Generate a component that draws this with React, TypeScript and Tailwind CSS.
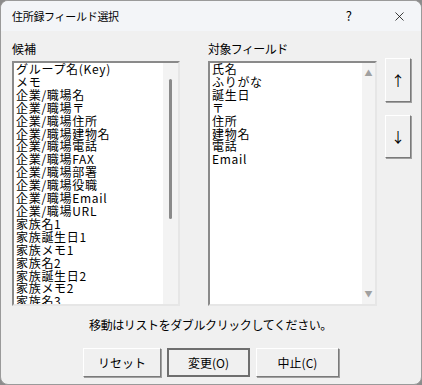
import { X } from 'lucide-react'

const candidates = [
  'グループ名(Key)',
  'メモ',
  '企業/職場名',
  '企業/職場〒',
  '企業/職場住所',
  '企業/職場建物名',
  '企業/職場電話',
  '企業/職場FAX',
  '企業/職場部署',
  '企業/職場役職',
  '企業/職場Email',
  '企業/職場URL',
  '家族名1',
  '家族誕生日1',
  '家族メモ1',
  '家族名2',
  '家族誕生日2',
  '家族メモ2',
  '家族名3',
]

const targets = ['氏名', 'ふりがな', '誕生日', '〒', '住所', '建物名', '電話', 'Email']

const font = { fontFamily: '"Noto Sans CJK JP", "Liberation Sans", sans-serif' }

function Btn({ label, def, className }: { label: string; def?: boolean; className?: string }) {
  return (
    <button
      className={`flex items-center justify-center bg-[#f0f0f0] text-[12px] text-black ${
        def
          ? 'border-2 border-[#6e6e6e]'
          : 'border border-t-white border-l-white border-r-[#7a7a7a] border-b-[#7a7a7a] shadow-[1px_1px_0_#a0a0a0]'
      } ${className ?? ''}`}
    >
      {label}
    </button>
  )
}

export default function App() {
  return (
    <div className="w-[422px] h-[385px] bg-[#8c8c8c]" style={font}>
      <div className="w-full h-full rounded-[8px] overflow-hidden border border-[#9a9a9a] bg-[#f0f0f0] flex flex-col">
        {/* タイトルバー */}
        <div className="h-[30px] shrink-0 bg-[#f3f5f8] flex items-center pl-[11px] text-[11px] text-black">
          <span className="tracking-[-0.3px]">住所録フィールド選択</span>
          <span className="ml-auto mr-[40px] text-[13px]">?</span>
          <X size={15} strokeWidth={1.2} className="mr-[14px]" />
        </div>

        <div className="flex-1 flex flex-col pl-[11px] pt-[11px]">
          <div className="flex text-[12px] leading-[13px] text-black">
            <span className="w-[196px]">候補</span>
            <span className="tracking-[-0.6px]">対象フィールド</span>
          </div>

          <div className="flex items-start mt-[3px]">
            {/* 候補リスト */}
            <div className="mt-[3px] w-[168px] h-[245px] flex border-2 border-t-[#8a8a8a] border-l-[#8a8a8a] border-r-[#e6e6e6] border-b-[#e6e6e6] bg-white">
              <div className="flex-1 overflow-hidden pl-[2px] text-[12px] leading-[12.9px] tracking-[0.7px] text-black whitespace-nowrap">
                {candidates.map(c => (
                  <div key={c}>{c}</div>
                ))}
              </div>
              <div className="w-[15px] bg-[#f3f3f3] flex justify-center">
                <div className="mt-[16px] w-[3px] h-[140px] rounded-full bg-[#8a8a8a]" />
              </div>
            </div>

            {/* 対象フィールドリスト */}
            <div className="mt-[3px] ml-[28px] w-[169px] h-[245px] flex border-2 border-t-[#8a8a8a] border-l-[#8a8a8a] border-r-[#e6e6e6] border-b-[#e6e6e6] bg-white">
              <div className="flex-1 overflow-hidden pl-[2px] text-[12px] leading-[12.9px] tracking-[0.7px] text-black whitespace-nowrap">
                {targets.map(c => (
                  <div key={c}>{c}</div>
                ))}
              </div>
              <div className="w-[13px] bg-[#f3f3f3] flex flex-col items-center justify-between py-[6px] text-[8px] leading-[8px] text-[#a0a0a0]">
                <span>▲</span>
                <span>▼</span>
              </div>
            </div>

            <div className="ml-[8px] flex flex-col gap-[13px]">
              <Btn label="↑" className="w-[26px] h-[44px] text-[14px]" />
              <Btn label="↓" className="w-[26px] h-[43px] text-[14px]" />
            </div>
          </div>

          <div className="mt-[12px] pr-[12px] text-center text-[12px] leading-[13px] tracking-[-0.4px] text-black">
            移動はリストをダブルクリックしてください。
          </div>

          <div className="mt-[17px] pr-[11px] flex justify-center gap-[6px]">
            <Btn label="リセット" className="w-[78px] h-[29px]" />
            <Btn label="変更(O)" def className="w-[83px] h-[29px]" />
            <Btn label="中止(C)" className="w-[83px] h-[29px]" />
          </div>
        </div>
      </div>
    </div>
  )
}
